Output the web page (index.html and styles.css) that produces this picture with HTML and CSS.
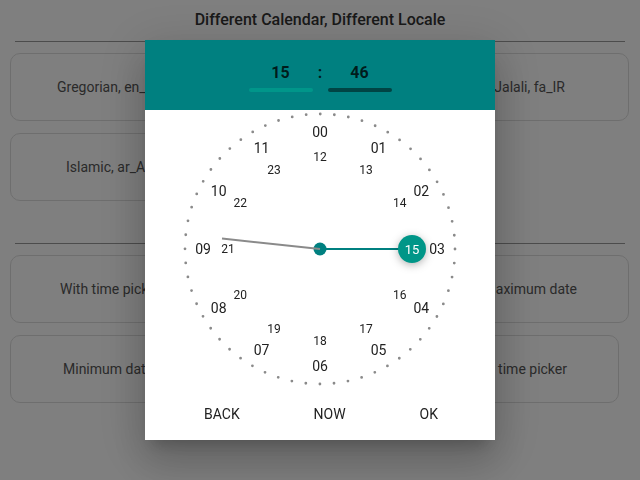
FILE: index.html
```html
<!DOCTYPE html>
<html lang="en">
<head>
<meta charset="utf-8">
<title>Different Calendar, Different Locale</title>
<link rel="stylesheet" href="styles.css">
</head>
<body>
<main class="page">
  <h1 class="title">Different Calendar, Different Locale</h1>
  <hr class="rule">
  <section class="cards">
    <div class="card card--start pad-a">Gregorian, en_US</div>
    <div class="card card--end pad-e">Jalali, fa_IR</div>
    <div class="card card--start pad-b">Islamic, ar_AE</div>
  </section>
  <hr class="rule rule--lower">
  <section class="cards">
    <div class="card card--start pad-c">With time picker</div>
    <div class="card card--end pad-f">Maximum date</div>
    <div class="card card--start pad-d">Minimum date</div>
    <div class="card card--end pad-f card--inset">Only time picker</div>
  </section>
</main>

<div class="overlay">
  <div class="dialog">
    <div class="dialog__header">
      <div class="time">
        <div class="time__part time__part--active">
          <span class="time__value">15</span>
          <span class="time__bar"></span>
        </div>
        <span class="time__sep">:</span>
        <div class="time__part time__part--idle">
          <span class="time__value">46</span>
          <span class="time__bar"></span>
        </div>
      </div>
    </div>
    <div class="dialog__body">
      <svg class="clock" width="350" height="276" viewBox="0 0 350 276">
        <circle class="clock__ticks" cx="175" cy="139" r="135"/>
        <circle class="clock__pivot" cx="175" cy="139" r="6.5"/>
        <line class="clock__hour" x1="175" y1="139" x2="254" y2="139"/>
        <line class="clock__minute" x1="175" y1="139" x2="77" y2="128.6"/>
        <g class="clock__outer">
          <text x="175" y="22">00</text>
          <text x="233.5" y="37.7">01</text>
          <text x="276.3" y="80.5">02</text>
          <text x="292" y="139">03</text>
          <text x="276.3" y="197.5">04</text>
          <text x="233.5" y="240.3">05</text>
          <text x="175" y="256">06</text>
          <text x="116.5" y="240.3">07</text>
          <text x="73.7" y="197.5">08</text>
          <text x="58" y="139">09</text>
          <text x="73.7" y="80.5">10</text>
          <text x="116.5" y="37.7">11</text>
        </g>
        <g class="clock__inner">
          <text x="175" y="47">12</text>
          <text x="221" y="59.3">13</text>
          <text x="254.7" y="93">14</text>
          <text x="254.7" y="185">16</text>
          <text x="221" y="218.7">17</text>
          <text x="175" y="231">18</text>
          <text x="129" y="218.7">19</text>
          <text x="95.3" y="185">20</text>
          <text x="83" y="139">21</text>
          <text x="95.3" y="93">22</text>
          <text x="129" y="59.3">23</text>
        </g>
        <circle class="clock__selected" cx="267" cy="139" r="14"/>
        <text class="clock__selected-label" x="267" y="139">15</text>
      </svg>
      <div class="actions">
        <button class="action" type="button">BACK</button>
        <button class="action" type="button">NOW</button>
        <button class="action" type="button">OK</button>
      </div>
    </div>
  </div>
</div>
</body>
</html>
```

FILE: styles.css
```css
* { box-sizing: border-box; }

html, body {
  margin: 0;
  padding: 0;
  background: #ffffff;
  font-family: Roboto, "Liberation Sans", Arial, sans-serif;
}

.page {
  width: 640px;
  height: 480px;
  overflow: hidden;
}

.title {
  margin: 0;
  padding: 10px 0;
  font-size: 16px;
  line-height: 20px;
  font-weight: 500;
  text-align: center;
  color: #333333;
}

.rule {
  margin: 1px 15px 0;
  border: 0;
  border-top: 1px solid #999999;
}

.rule--lower {
  margin-top: 42px;
}

.cards {
  margin: 11px 11px 0 10px;
  display: grid;
  grid-template-columns: 1fr 1fr;
  column-gap: 12px;
  row-gap: 12px;
}

.card {
  height: 68px;
  border: 1px solid #dddddd;
  border-radius: 10px;
  display: flex;
  align-items: center;
  font-size: 14px;
  color: #555555;
  white-space: nowrap;
  overflow: hidden;
}

.card--start { justify-content: flex-start; }
.card--end { justify-content: flex-end; }
.card--inset { margin-right: 10px; }

.pad-a { padding-left: 46px; }
.pad-b { padding-left: 55px; }
.pad-c { padding-left: 49px; }
.pad-d { padding-left: 52px; }
.pad-e { padding-right: 63px; }
.pad-f { padding-right: 51px; }

.overlay {
  position: fixed;
  inset: 0;
  background: rgba(0, 0, 0, 0.5);
  display: flex;
  align-items: center;
  justify-content: center;
}

.dialog {
  width: 350px;
  height: 400px;
  background: #ffffff;
  display: flex;
  flex-direction: column;
  box-shadow: 0 11px 15px -7px rgba(0, 0, 0, 0.2),
              0 24px 38px 3px rgba(0, 0, 0, 0.14),
              0 9px 46px 8px rgba(0, 0, 0, 0.12);
}

.dialog__header {
  height: 70px;
  background: #008080;
  padding-top: 23px;
  display: flex;
  justify-content: center;
}

.time {
  display: flex;
  align-items: flex-start;
}

.time__part {
  width: 64px;
  display: flex;
  flex-direction: column;
  align-items: center;
}

.time__value {
  font-size: 16px;
  line-height: 20px;
  font-weight: bold;
  color: rgba(0, 0, 0, 0.78);
}

.time__bar {
  margin-top: 5px;
  width: 64px;
  height: 4px;
  border-radius: 2px;
}

.time__part--active .time__bar { background: #00968a; }
.time__part--idle .time__bar { background: #004444; }

.time__sep {
  width: 15px;
  text-align: center;
  font-size: 16px;
  line-height: 20px;
  font-weight: bold;
  color: rgba(0, 0, 0, 0.78);
}

.dialog__body {
  flex: 1;
  display: flex;
  flex-direction: column;
}

.clock {
  display: block;
  font-family: Roboto, "Liberation Sans", Arial, sans-serif;
}

.clock__ticks {
  fill: none;
  stroke: #8a8a8a;
  stroke-width: 2.8;
  stroke-linecap: round;
  stroke-dasharray: 0 14.1372;
}

.clock__pivot { fill: #008080; }

.clock__hour {
  stroke: #008080;
  stroke-width: 2;
}

.clock__minute {
  stroke: #8a8a8a;
  stroke-width: 2;
}

.clock__outer text,
.clock__inner text,
.clock__selected-label {
  text-anchor: middle;
  fill: #222222;
}

.clock__outer text { font-size: 14px; }
.clock__outer text { transform: translateY(5px); }
.clock__inner text { font-size: 12px; transform: translateY(4.3px); }

.clock__selected {
  fill: #009688;
  filter: drop-shadow(0 2px 4px rgba(0, 0, 0, 0.3));
}

.clock__selected-label {
  font-size: 13px;
  fill: #ffffff;
  transform: translateY(4.6px);
}

.actions {
  flex: 1;
  display: flex;
  align-items: center;
  justify-content: space-between;
  padding: 2px 41px 0 43px;
}

.action {
  border: 0;
  background: none;
  padding: 0 16px;
  font-family: Roboto, "Liberation Sans", Arial, sans-serif;
  font-size: 14px;
  line-height: 20px;
  color: #222222;
}
```
